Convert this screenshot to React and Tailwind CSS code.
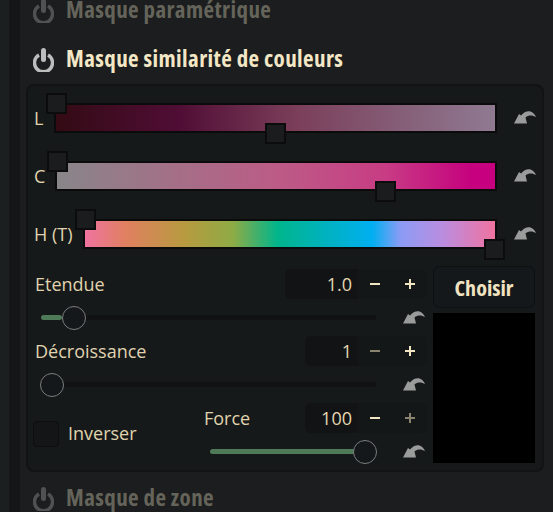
const FONT = "font-['Open_Sans',sans-serif]";
const TITLE_FONT = "font-['Open_Sans',sans-serif] [font-stretch:75%]";

function PowerIcon({ dim }) {
  const color = dim ? '#4f5152' : '#bdbdbd';
  return (
    <svg width="21" height="24" viewBox="0 0 21 24" fill="none" className="shrink-0">
      <path d="M6 7 A9 9 0 1 0 15 7" stroke={color} strokeWidth="3.5" />
      <path d="M10.5 2.5 V11.5" stroke={color} strokeWidth="5" strokeLinecap="round" />
    </svg>
  );
}

function ResetIcon() {
  return (
    <svg width="22" height="13" viewBox="0 0 22 13" className="shrink-0">
      <path d="M0 12.5 L5 3 L7 4.5 C10 1 14 -0.5 17 0.8 C19 1.6 21 3.5 22 6 C19 4.5 15 3.5 11.5 6.5 L13 12.5 Z" fill="#9a9c9b" />
    </svg>
  );
}

function Handle({ className }) {
  return <div className={`absolute w-[21px] h-[21px] bg-[#1a1c1e] border-2 border-[#0c0c0c] ${className}`} />;
}

function ColorRow({ label, barClass, gradient, children }) {
  return (
    <div className="flex items-center h-[30px]">
      <span className={`w-[27px] ml-[8px] shrink-0 whitespace-nowrap text-[18px] text-[#e0d3ae] ${FONT}`}>{label}</span>
      <div className={`relative h-[30px] border-2 border-[#0b0b0b] ${barClass}`}>
        <div className={`h-full ${gradient}`} />
        {children}
      </div>
      <div className="ml-[17px] -mt-[1px]">
        <ResetIcon />
      </div>
    </div>
  );
}

function SpinBox({ value, width, minusOff, plusOff }) {
  return (
    <div className={`flex h-[30px] rounded-md overflow-hidden bg-[#141718] ${width}`}>
      <div className={`flex-1 flex items-center justify-end pr-[6px] bg-[#111314] text-[18px] text-[#e4d7b2] ${FONT}`}>{value}</div>
      <div className="w-[34px] flex items-center justify-center">
        <div className={`w-[10px] h-[2px] ${minusOff ? 'bg-[#8a8370]' : 'bg-[#f1e5c4]'}`} />
      </div>
      <div className="w-[35px] flex items-center justify-center relative">
        <div className={`w-[10px] h-[2px] ${plusOff ? 'bg-[#8a8370]' : 'bg-[#f1e5c4]'}`} />
        <div className={`absolute w-[2px] h-[10px] ${plusOff ? 'bg-[#8a8370]' : 'bg-[#f1e5c4]'}`} />
      </div>
    </div>
  );
}

function Slider({ track, fill, thumb }) {
  return (
    <div className="flex items-center h-[37px]">
      <div className={`relative h-[5px] rounded-full bg-[#101213] ${track}`}>
        <div className={`h-full rounded-full bg-[#4f7a57] ${fill}`} />
        <div className={`absolute top-1/2 -translate-y-1/2 w-[24px] h-[24px] rounded-full bg-[#14181a] border border-[#7c7d7d] ${thumb}`} />
      </div>
    </div>
  );
}

function Heading({ children, dim, className = '' }) {
  return (
    <div className={`flex items-center ml-[13px] gap-[12px] ${className}`}>
      <PowerIcon dim={dim} />
      <span className={`whitespace-nowrap -mt-[4px] text-[23px] tracking-[0.4px] font-bold ${dim ? 'text-[#65645a]' : 'text-[#f3e7c6]'} ${TITLE_FONT}`}>{children}</span>
    </div>
  );
}

export default function App() {
  return (
    <div className="w-[553px] h-[512px] overflow-hidden flex bg-[#1b1d1e]">
      <div className="w-[9px] shrink-0 bg-[#1b1f20]" />
      <div className="w-[11px] shrink-0 bg-[#141617]" />
      <div className="w-[533px] shrink-0 flex flex-col">
        <Heading dim className="h-[24px] mt-[-1px]">Masque paramétrique</Heading>
        <Heading className="h-[24px] mt-[25px]">Masque similarité de couleurs</Heading>

        <div className="ml-[6px] w-[518px] h-[388px] mt-[12px] rounded-lg bg-[#15191a] border-2 border-[#111314] pt-[17px]">
          <div className="flex flex-col gap-[28px] ml-[-2px]">
            <ColorRow label="L" barClass="w-[443px] -ml-[7px]" gradient="bg-[linear-gradient(90deg,#330b14,#500d35_28%,#7b3f5a_55%,#8f7a92)]">
              <Handle className="-left-[10px] -top-[12px]" />
              <Handle className="left-[209px] top-[18px]" />
            </ColorRow>
            <ColorRow label="C" barClass="w-[442px] -ml-[6px]" gradient="bg-[linear-gradient(90deg,#888689,#bc5c86_50%,#c83c84_75%,#c6007e_95%)]">
              <Handle className="-left-[10px] -top-[12px]" />
              <Handle className="left-[318px] top-[18px]" />
            </ColorRow>
            <ColorRow label="H (T)" barClass="w-[414px] ml-[22px]" gradient="bg-[linear-gradient(90deg,#f073a0,#e08060_10%,#b89a40_24%,#8fab45_36%,#00b58c_47%,#00aff0_70%,#8c9bf5_77%,#b98de0_87%,#f073a0)]">
              <Handle className="-left-[10px] -top-[12px]" />
              <Handle className="left-[399px] top-[18px]" />
            </ColorRow>
          </div>

          <div className="flex mt-[17px]">
            <div className="w-[399px] pt-[3px]">
              <div className="flex items-center justify-between h-[30px] pl-[7px]">
                <span className={`text-[18px] text-[#e0d3ae] ${FONT}`}>Etendue</span>
                <SpinBox value="1.0" width="w-[142px]" />
              </div>
              <div className="flex items-center justify-between pl-[13px] pr-[2px]">
                <Slider track="w-[335px]" fill="w-[21px]" thumb="left-[21px]" />
                <ResetIcon />
              </div>
              <div className="flex items-center justify-between h-[30px] pl-[7px]">
                <span className={`text-[18px] text-[#e0d3ae] ${FONT}`}>Décroissance</span>
                <SpinBox value="1" width="w-[122px]" minusOff />
              </div>
              <div className="flex items-center justify-between pl-[13px] pr-[2px]">
                <Slider track="w-[335px]" fill="w-0" thumb="left-[-1px]" />
                <ResetIcon />
              </div>
              <div className="flex">
                <div className="flex items-center self-start mt-[17px] ml-[5px] gap-[9px] w-[171px]">
                  <div className="w-[26px] h-[26px] rounded-sm bg-[#131516] border border-[#0d0e0f]" />
                  <span className={`text-[18px] text-[#e0d3ae] ${FONT}`}>Inverser</span>
                </div>
                <div className="flex-1">
                  <div className="flex items-center justify-between h-[30px]">
                    <span className={`text-[18px] text-[#e0d3ae] ${FONT}`}>Force</span>
                    <SpinBox value="100" width="w-[122px]" plusOff />
                  </div>
                  <div className="flex items-center justify-between pl-[6px] pr-[2px]">
                    <Slider track="w-[146px]" fill="w-full" thumb="left-[143px]" />
                    <ResetIcon />
                  </div>
                </div>
              </div>
            </div>
            <div className="ml-[6px] w-[102px]">
              <div className={`h-[42px] flex items-center justify-center rounded-md bg-[#15181a] border border-[#0e1011] text-[22px] font-bold text-[#f0e3c2] ${TITLE_FONT}`}>Choisir</div>
              <div className="h-[150px] mt-[5px] bg-black" />
            </div>
          </div>
        </div>

        <Heading dim className="h-[24px] mt-[15px]">Masque de zone</Heading>
      </div>
    </div>
  );
}
